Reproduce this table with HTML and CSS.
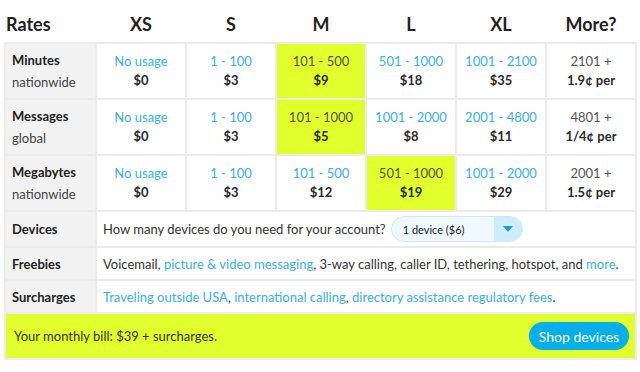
FILE: index.html
```html
<!DOCTYPE html>
<html lang="en">
<head>
<meta charset="utf-8">
<title>Rates</title>
<link rel="stylesheet" href="styles.css">
</head>
<body>
<table class="rates">
  <colgroup>
    <col class="c-label">
    <col class="c-size"><col class="c-size"><col class="c-size">
    <col class="c-size"><col class="c-size"><col class="c-size">
  </colgroup>
  <thead>
    <tr>
      <th class="h-label">Rates</th>
      <th>XS</th><th>S</th><th>M</th><th>L</th><th>XL</th><th>More?</th>
    </tr>
  </thead>
  <tbody>
    <tr class="usage">
      <th class="label"><span class="name">Minutes</span><span class="sub">nationwide</span></th>
      <td><span class="range">No usage</span><span class="price">$0</span></td>
      <td><span class="range">1 - 100</span><span class="price">$3</span></td>
      <td class="on"><span class="range">101 - 500</span><span class="price">$9</span></td>
      <td><span class="range">501 - 1000</span><span class="price">$18</span></td>
      <td><span class="range">1001 - 2100</span><span class="price">$35</span></td>
      <td class="more"><span class="range">2101 +</span><span class="price">1.9¢ per</span></td>
    </tr>
    <tr class="usage">
      <th class="label"><span class="name">Messages</span><span class="sub">global</span></th>
      <td><span class="range">No usage</span><span class="price">$0</span></td>
      <td><span class="range">1 - 100</span><span class="price">$3</span></td>
      <td class="on"><span class="range">101 - 1000</span><span class="price">$5</span></td>
      <td><span class="range">1001 - 2000</span><span class="price">$8</span></td>
      <td><span class="range">2001 - 4800</span><span class="price">$11</span></td>
      <td class="more"><span class="range">4801 +</span><span class="price">1/4¢ per</span></td>
    </tr>
    <tr class="usage">
      <th class="label"><span class="name">Megabytes</span><span class="sub">nationwide</span></th>
      <td><span class="range">No usage</span><span class="price">$0</span></td>
      <td><span class="range">1 - 100</span><span class="price">$3</span></td>
      <td><span class="range">101 - 500</span><span class="price">$12</span></td>
      <td class="on"><span class="range">501 - 1000</span><span class="price">$19</span></td>
      <td><span class="range">1001 - 2000</span><span class="price">$29</span></td>
      <td class="more"><span class="range">2001 +</span><span class="price">1.5¢ per</span></td>
    </tr>
    <tr class="devices">
      <th class="label"><span class="name">Devices</span></th>
      <td colspan="6" class="wide">
        <div class="ask">
          <span>How many devices do you need for your account?</span>
          <span class="select">
            <span class="select-value">1 device ($6)</span>
            <span class="select-arrow"><svg width="10" height="6" viewBox="0 0 10 6"><path d="M0 0H10L5 6Z" fill="#1a9be0"/></svg></span>
          </span>
        </div>
      </td>
    </tr>
    <tr class="info">
      <th class="label"><span class="name">Freebies</span></th>
      <td colspan="6" class="wide">Voicemail, <a href="#">picture &amp; video messaging</a>, 3-way calling, caller ID, tethering, hotspot, and <a href="#">more</a>.</td>
    </tr>
    <tr class="info">
      <th class="label"><span class="name">Surcharges</span></th>
      <td colspan="6" class="wide"><a href="#">Traveling outside USA</a>, <a href="#">international calling</a>, <a href="#">directory assistance regulatory fees</a>.</td>
    </tr>
  </tbody>
  <tfoot>
    <tr>
      <td colspan="7" class="bill">
        <div class="bill-row">
          <span>Your monthly bill: $39 + surcharges.</span>
          <a href="#" class="shop">Shop devices</a>
        </div>
      </td>
    </tr>
  </tfoot>
</table>
</body>
</html>
```

FILE: styles.css
```css
html, body {
  margin: 0;
  padding: 0;
  background: #ffffff;
}

body {
  font-family: Lato, "Open Sans", Arial, sans-serif;
  color: #333333;
  font-size: 13px;
}

.rates {
  margin-left: 4px;
  width: 630px;
  border-collapse: collapse;
  table-layout: fixed;
}

.c-label { width: 91px; }
.c-size { width: 90px; }

thead th {
  height: 36px;
  padding: 6px 0 0;
  font-size: 18px;
  font-weight: 700;
  color: #222222;
  text-align: center;
  vertical-align: middle;
}

thead th.h-label {
  text-align: left;
  padding-left: 1px;
}

tbody th,
tbody td,
tfoot td {
  border: 2px solid #ebebeb;
}

.label {
  background: #f2f2f2;
  text-align: left;
  vertical-align: middle;
  padding: 0 6px;
  line-height: 22px;
  font-weight: 400;
}

.label .name {
  display: block;
  font-weight: 700;
  color: #222222;
}

.label .sub {
  display: block;
  color: #444444;
}

.usage td,
.usage th {
  height: 54px;
  padding-top: 0;
  padding-bottom: 0;
}

.usage td {
  text-align: center;
  vertical-align: middle;
  line-height: 19px;
}

.usage .range {
  display: block;
  color: #3aaee9;
}

.usage .price {
  display: block;
  font-weight: 700;
  color: #2a2a2a;
}

.usage td.on {
  background: #e1ff2c;
}

.usage td.on .range,
.usage td.more .range {
  color: #555555;
}

.devices th,
.devices td {
  height: 34px;
}

.info th,
.info td {
  height: 31px;
}

.wide {
  padding: 0 6px;
  vertical-align: middle;
  color: #333333;
}

.wide a {
  color: #3aaee9;
  text-decoration: none;
}

.ask {
  display: flex;
  align-items: center;
  gap: 5px;
}

.select {
  display: inline-flex;
  width: 132px;
  height: 26px;
  box-sizing: border-box;
  border: 1px solid #cfe8f7;
  border-radius: 13px;
  background: #eef8fe;
  overflow: hidden;
  font-size: 11px;
  color: #222222;
}

.select-value {
  flex: 1;
  display: flex;
  align-items: center;
  padding-left: 11px;
}

.select-arrow {
  width: 28px;
  display: flex;
  align-items: center;
  justify-content: center;
  background: #cdedfb;
}

.bill {
  height: 44px;
  padding: 0 6px 0 8px;
  background: #e1ff2c;
  vertical-align: middle;
  color: #333333;
}

.bill-row {
  display: flex;
  align-items: center;
  justify-content: space-between;
}

.shop {
  display: inline-flex;
  align-items: center;
  justify-content: center;
  width: 100px;
  height: 28px;
  border-radius: 14px;
  background: #06aeea;
  color: #ffffff;
  font-size: 14px;
  text-decoration: none;
}
```
